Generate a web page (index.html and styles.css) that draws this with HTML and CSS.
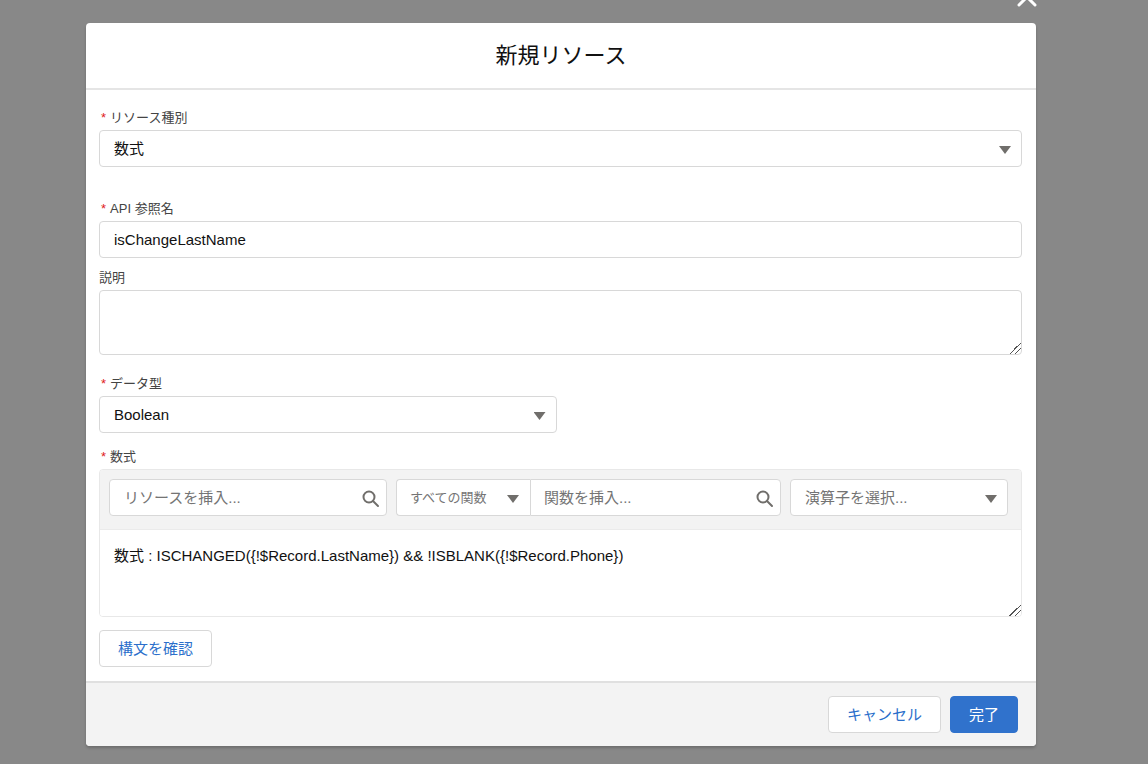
FILE: index.html
```html
<!DOCTYPE html>
<html lang="ja">
<head>
<meta charset="utf-8">
<title>新規リソース</title>
<link rel="stylesheet" href="styles.css">
</head>
<body>
<div class="backdrop">
  <section class="modal" role="dialog" aria-modal="true" aria-labelledby="title">
    <button class="close" type="button" aria-label="閉じる">
      <svg viewBox="0 0 22 22" width="22" height="22" aria-hidden="true"><path d="M3 3L19 19M19 3L3 19"/></svg>
    </button>
    <header class="modal-header"><h1 id="title">新規リソース</h1></header>
    <form class="modal-body">
      <div class="field field-type">
        <label class="label required" for="type">リソース種別</label>
        <div class="select"><select class="control" id="type"><option>数式</option></select></div>
      </div>
      <div class="field field-api">
        <label class="label required" for="api">API 参照名</label>
        <input class="control" id="api" type="text" value="isChangeLastName">
      </div>
      <div class="field field-description">
        <label class="label" for="description">説明</label>
        <textarea class="control description" id="description"></textarea>
      </div>
      <div class="field field-data">
        <label class="label required" for="data">データ型</label>
        <div class="select"><select class="control" id="data"><option>Boolean</option></select></div>
      </div>
      <div class="field field-formula">
        <label class="label required" for="formula">数式</label>
        <div class="editor">
          <div class="toolbar">
            <div class="search">
              <input class="control" type="text" placeholder="リソースを挿入..." aria-label="リソースを挿入">
              <svg class="search-icon" viewBox="0 0 18 18" width="18" height="18" aria-hidden="true"><circle cx="7" cy="7" r="5.5"/><path d="M11 11L16 16"/></svg>
            </div>
            <div class="functions">
              <div class="select"><select class="control category" aria-label="関数の種類"><option>すべての関数</option></select></div>
              <div class="search">
                <input class="control" type="text" placeholder="関数を挿入..." aria-label="関数を挿入">
                <svg class="search-icon" viewBox="0 0 18 18" width="18" height="18" aria-hidden="true"><circle cx="7" cy="7" r="5.5"/><path d="M11 11L16 16"/></svg>
              </div>
            </div>
            <div class="select"><select class="control muted" aria-label="演算子を選択"><option>演算子を選択...</option></select></div>
          </div>
          <textarea class="formula" id="formula" spellcheck="false">数式 : ISCHANGED({!$Record.LastName}) &amp;&amp; !ISBLANK({!$Record.Phone})</textarea>
        </div>
      </div>
      <button class="button check" type="button">構文を確認</button>
    </form>
    <footer class="modal-footer">
      <button class="button" type="button">キャンセル</button>
      <button class="button primary" type="button">完了</button>
    </footer>
  </section>
</div>
</body>
</html>
```
FILE: styles.css
```css
* { box-sizing: border-box; }

body {
  margin: 0;
  background: #888;
  color: #111;
  font: 15px/24px "Liberation Sans", "Noto Sans CJK JP", sans-serif;
}

button, input, select, textarea { font: inherit; color: inherit; }

.backdrop { min-height: 100vh; padding: 23px 112px 18px 86px; }

.modal {
  position: relative;
  border-radius: 4px;
  background: #fff;
  box-shadow: 0 2px 3px rgba(0, 0, 0, .2);
}

.close {
  position: absolute;
  top: -37px;
  right: -2px;
  display: flex;
  padding: 0;
  border: 0;
  background: none;
}

.close svg { fill: none; stroke: #fff; stroke-width: 3; stroke-linecap: round; }

.modal-header { padding: 16px; border-bottom: 2px solid #e5e5e5; }

h1 { margin: 0; font-size: 22px; line-height: 33px; font-weight: 400; text-align: center; }

.modal-body { padding: 18px 14px 14px 13px; }

.field-type { margin-bottom: 32px; }
.field-api { margin-bottom: 10px; }
.field-description { margin-bottom: 19px; }
.field-data { width: calc(50% - 4px); margin-bottom: 14px; }
.field-formula { margin-bottom: 13px; }

.label { display: block; height: 22px; color: #444; font-size: 13px; line-height: 19px; }
.required::before { content: "*"; margin: 0 4px 0 2px; color: #e02020; }

.control {
  display: block;
  width: 100%;
  height: 37px;
  padding: 0 14px;
  border: 1px solid #d8d8d8;
  border-radius: 4px;
  background: #fff;
  outline: 0;
}

.description { height: 65px; padding: 8px 14px; }

.select, .search { position: relative; }
.select select { appearance: none; padding-right: 32px; }

.select::after {
  content: "";
  position: absolute;
  top: 16px;
  right: 11px;
  width: 12px;
  height: 8px;
  background: #706e6b;
  clip-path: polygon(0 0, 100% 0, 50% 100%);
  pointer-events: none;
}

.search .control { padding-right: 32px; }
.search-icon { position: absolute; top: 11px; right: 7px; fill: none; stroke: #706e6b; stroke-width: 2; stroke-linecap: round; }

::placeholder { color: #747474; opacity: 1; }
.muted { color: #747474; }

textarea::-webkit-resizer {
  background: linear-gradient(135deg, transparent 60%, #555 60% 65%, transparent 65% 77%, #555 77% 82%, transparent 82%);
}

.editor { border: 1px solid #e8e8e8; border-radius: 4px; overflow: hidden; }

.toolbar {
  display: grid;
  grid-template-columns: 278fr 385fr 218fr;
  gap: 9px;
  padding: 9px 13px 13px 9px;
  border-bottom: 1px solid #ebebeb;
  background: #f3f3f3;
}

.functions { display: grid; grid-template-columns: 134fr 251fr; }
.functions .select .control { border-right: 0; border-radius: 4px 0 0 4px; }
.functions .search .control { border-radius: 0 4px 4px 0; }
.functions .control { padding-left: 13px; }
.category { color: #747474; font-size: 13px; }

.formula {
  display: block;
  width: 100%;
  height: 86px;
  padding: 14px;
  border: 0;
  background: #fff;
  outline: 0;
  resize: vertical;
}

.button {
  height: 37px;
  padding: 0 18px;
  border: 1px solid #d8d8d8;
  border-radius: 4px;
  background: #fff;
  color: #2b6fcb;
}

.check { display: block; }

.primary { border-color: #3072cc; background: #3072cc; color: #fff; }

.modal-footer {
  display: flex;
  justify-content: flex-end;
  gap: 9px;
  padding: 13px 18px;
  border-top: 2px solid #e0e0e0;
  border-radius: 0 0 4px 4px;
  background: #f3f3f3;
}
```
